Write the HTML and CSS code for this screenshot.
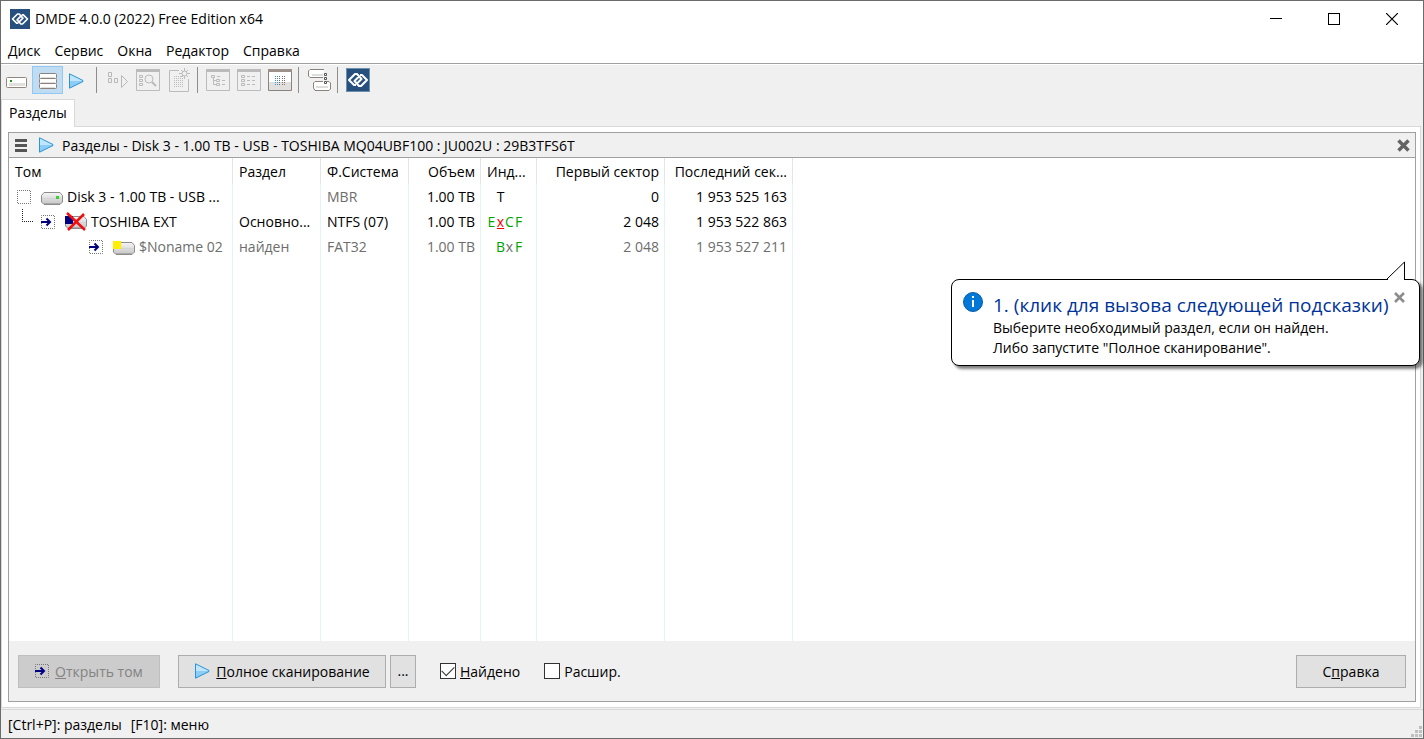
FILE: index.html
```html
<!DOCTYPE html>
<html lang="ru">

<head>
    <meta charset="UTF-8">
    <meta name="viewport" content="width=device-width, initial-scale=1.0">
    <title>DMDE 4.0.0 (2022) Free Edition x64</title>
    <link rel="stylesheet" href="styles.css">
</head>

<body>
    <!-- shared icons -->
    <svg class="defs" width="0" height="0">
        <defs>
            <linearGradient id="blue" x1="0" y1="0" x2="0" y2="1">
                <stop offset="0.5" stop-color="#bfe6fc" />
                <stop offset="0.5" stop-color="#8ccdf8" />
            </linearGradient>
            <linearGradient id="metal" x1="0" y1="0" x2="0" y2="1">
                <stop offset="0" stop-color="#f6f6f6" />
                <stop offset="1" stop-color="#c4c4c4" />
            </linearGradient>
            <symbol id="logo" viewBox="0 0 24 24">
                <rect width="24" height="24" fill="#28507e" />
                <path d="M11 15.5L15.5 11L11 6H9L3 12L8 17H10M13 8.5L8.5 13L13 18H15L21 12L16 7H14" fill="none" stroke="#fff" stroke-width="2" stroke-linejoin="round" />
            </symbol>
            <symbol id="play" viewBox="0 0 16 16">
                <path d="M1.5 0.8V15.2L15 8.5V7.5Z" fill="url(#blue)" stroke="#2a93d0" />
            </symbol>
            <symbol id="arrow" viewBox="0 0 14 14">
                <rect x="0.5" y="0.5" width="13" height="13" fill="none" stroke="#777" stroke-dasharray="1 1" stroke-dashoffset="0.5" />
                <path d="M0 7H9M5.5 3.5L9 7L5.5 10.5" fill="none" stroke="#000080" stroke-width="2" />
            </symbol>
            <symbol id="drive" viewBox="0 0 22 13">
                <path d="M3 0.5H19L21.5 3.5V10L19 12.5H3L0.5 10V3.5Z" fill="url(#metal)" stroke="#8c8c8c" />
                <path d="M1 6.5H21" stroke="#d4d4d4" />
                <path d="M3 11.5H19" stroke="#aaa" />
            </symbol>
        </defs>
    </svg>

    <div class="window">
        <header class="titlebar">
            <svg class="app-icon" width="20" height="20"><use href="#logo" /></svg>
            <h1>DMDE 4.0.0 (2022) Free Edition x64</h1>
            <div class="controls">
                <button aria-label="Свернуть"><svg width="12" height="12"><path d="M0 5.5H12" stroke="#000" /></svg></button>
                <button aria-label="Развернуть"><svg width="12" height="12"><rect x="0.5" y="0.5" width="11" height="11" fill="none" stroke="#000" /></svg></button>
                <button aria-label="Закрыть"><svg width="12" height="12"><path d="M0 0L12 12M12 0L0 12" stroke="#000" stroke-width="1.2" /></svg></button>
            </div>
        </header>

        <nav class="menu">
            <button>Диск</button>
            <button>Сервис</button>
            <button>Окна</button>
            <button>Редактор</button>
            <button>Справка</button>
        </nav>

        <div class="toolbar">
            <button aria-label="Выбрать устройство">
                <svg viewBox="0 0 25 24">
                    <rect x="2.5" y="9.5" width="20" height="10" rx="1" fill="#fff" stroke="#92867f" />
                    <rect x="5" y="15" width="16" height="3" fill="#e2dfdf" />
                    <rect x="6" y="12" width="2" height="2" fill="#129a12" />
                </svg>
            </button>
            <button class="active" aria-label="Разделы">
                <svg viewBox="0 0 25 24">
                    <g fill="#fff" stroke="#8c817b">
                        <rect x="4.5" y="5.5" width="17" height="5" rx="1" />
                        <rect x="4.5" y="10.5" width="17" height="5" rx="1" />
                        <rect x="4.5" y="15.5" width="17" height="5" rx="1" />
                    </g>
                    <path d="M6 9.5H20M6 14.5H20M6 19.5H20" stroke="#ddd" />
                </svg>
            </button>
            <button aria-label="Полное сканирование">
                <svg viewBox="0 0 25 24"><use href="#play" x="2" y="5" width="16" height="16" /></svg>
            </button>
            <span class="sep"></span>
            <button disabled aria-label="Продолжить">
                <svg viewBox="0 0 25 24" fill="none" stroke="#b8b8b8">
                    <path d="M3.5 4.5H6.5V8.5H3.5ZM3.5 10.5H6.5V14.5H3.5ZM9.5 10.5H12.5V14.5H9.5ZM16.5 7.5V19.5L22.5 13.5Z" />
                </svg>
            </button>
            <button disabled aria-label="Поиск">
                <svg viewBox="0 0 25 24" fill="none" stroke="#bbb">
                    <path d="M0.5 1.5H23.5V22.5H0.5Z" />
                    <path d="M0 2.5H24" stroke-width="3" />
                    <path d="M3.5 7.5H6.5V9.5H3.5ZM3.5 11.5H6.5V13.5H3.5ZM3.5 15.5H6.5V17.5H3.5Z" />
                    <circle cx="13" cy="11" r="4" />
                    <path d="M16 14L20 18" stroke-width="2" />
                </svg>
            </button>
            <button disabled aria-label="Новый">
                <svg viewBox="0 0 25 24" fill="none" stroke="#bbb">
                    <path d="M12 2.5H2.5V23.5H21.5V11" />
                    <path d="M7 8.5H16M7 10.5H16M7 12.5H16M7 14.5H16M7 16.5H16M7 18.5H16" stroke-dasharray="1 1" />
                    <circle cx="17.5" cy="5.5" r="2.5" />
                    <path d="M17.5 0V3M17.5 8V11M12 5.5H15M20 5.5H23M14 2L16 4M19 7L21 9M21 2L19 4M16 7L14 9" />
                </svg>
            </button>
            <span class="sep"></span>
            <button disabled aria-label="Дерево">
                <svg viewBox="0 0 25 24" fill="none" stroke="#bbb">
                    <path d="M0.5 1.5H23.5V22.5H0.5Z" />
                    <path d="M0 2.5H24" stroke-width="3" />
                    <path d="M5.5 7.5H8.5V9.5H5.5ZM10.5 11.5H13.5V13.5H10.5ZM10.5 15.5H13.5V17.5H10.5ZM7.5 9.5V16.5H10M7.5 12.5H10M11 8.5H14M16 12.5H19M16 16.5H19" />
                </svg>
            </button>
            <button disabled aria-label="Список">
                <svg viewBox="0 0 25 24" fill="none" stroke="#bbb">
                    <path d="M0.5 1.5H23.5V22.5H0.5Z" />
                    <path d="M0 2.5H24" stroke-width="3" />
                    <path d="M4.5 7.5H7.5V9.5H4.5ZM4.5 11.5H7.5V13.5H4.5ZM4.5 15.5H7.5V17.5H4.5ZM10 8.5H13M15 8.5H18M10 12.5H13M15 12.5H18M10 16.5H13M15 16.5H18" />
                </svg>
            </button>
            <button aria-label="Редактор">
                <svg viewBox="0 0 25 24" fill="none">
                    <path d="M0.5 1.5H23.5V22.5H0.5Z" fill="#fff" stroke="#8d817b" />
                    <path d="M1 14H23V22H1Z" fill="#e2dfdf" />
                    <path d="M0 2.5H24" stroke="#9d918b" stroke-width="3" />
                    <path d="M7.5 8V17M9.5 8V17" stroke="#339acb" stroke-dasharray="1 1" />
                    <path d="M11.5 8V17M14.5 8V17M16.5 8V17" stroke="#77706c" stroke-dasharray="1 1" />
                </svg>
            </button>
            <span class="sep"></span>
            <button aria-label="Окна">
                <svg viewBox="0 0 25 24" stroke="#8d817b" fill="#fff">
                    <path d="M17 1.5H3L1.5 3V8L3 9.5H16" />
                    <path d="M5 7H16" stroke="#ddd" stroke-width="2" />
                    <path d="M16 13.5H8L6.5 15V20L8 22.5H22L23.5 21V15L22 13.5H20" />
                    <path d="M9 19H21" stroke="#ddd" stroke-width="2" />
                    <path d="M17.5 5.5H19.5V7.5H17.5ZM17.5 9.5H19.5V11.5H17.5ZM17.5 13.5H19.5V15.5H17.5Z" stroke="#555" />
                </svg>
            </button>
            <span class="sep"></span>
            <button aria-label="DMDE">
                <svg viewBox="0 0 25 24">
                    <use href="#logo" width="24" height="24" />
                    <rect x="0.5" y="0.5" width="23" height="23" fill="none" stroke="#6d8fae" />
                </svg>
            </button>
        </div>

        <div class="tabs">
            <button class="tab">Разделы</button>
        </div>

        <main class="page">
            <section class="panel">
                <div class="panel-head">
                    <button aria-label="Меню"><svg width="12" height="13"><path d="M0 1.5H12M0 6.5H12M0 11.5H12" stroke="#555" stroke-width="3" /></svg></button>
                    <svg class="head-play" width="16" height="16"><use href="#play" /></svg>
                    <h2>Разделы - Disk 3 - 1.00 TB - USB - TOSHIBA MQ04UBF100 : JU002U : 29B3TFS6T</h2>
                    <button aria-label="Закрыть панель"><svg width="13" height="13"><path d="M1.5 1.5L11.5 11.5M11.5 1.5L1.5 11.5" stroke="#636363" stroke-width="3.5" /></svg></button>
                </div>

                <div class="list">
                    <table>
                        <colgroup>
                            <col class="c-volume">
                            <col class="c-part">
                            <col class="c-part">
                            <col class="c-size">
                            <col class="c-ind">
                            <col class="c-sector">
                            <col class="c-sector">
                        </colgroup>
                        <thead>
                            <tr>
                                <th>Том</th>
                                <th>Раздел</th>
                                <th>Ф.Система</th>
                                <th class="num">Объем</th>
                                <th>Инд...</th>
                                <th class="num">Первый сектор</th>
                                <th class="num">Последний сек...</th>
                            </tr>
                        </thead>
                        <tbody>
                            <tr>
                                <td>
                                    <div class="node">
                                        <svg width="14" height="14"><rect x="0.5" y="0.5" width="13" height="13" fill="none" stroke="#777" stroke-dasharray="1 1" stroke-dashoffset="0.5" /></svg>
                                        <svg class="disk" width="22" height="16"><use href="#drive" y="3" width="22" height="13" /><rect x="15" y="7" width="3" height="3" fill="#34d334" /></svg>
                                        <span>Disk 3 - 1.00 TB - USB ...</span>
                                    </div>
                                </td>
                                <td></td>
                                <td class="muted">MBR</td>
                                <td class="num">1.00 TB</td>
                                <td><div class="flags"><i></i><i>T</i></div></td>
                                <td class="num">0</td>
                                <td class="num">1 953 525 163</td>
                            </tr>
                            <tr>
                                <td>
                                    <div class="node">
                                        <svg class="branch" width="14" height="25"><path d="M4.5 0V13M4 12.5H16" fill="none" stroke="#222" stroke-dasharray="1 1" /></svg>
                                        <svg width="14" height="14"><use href="#arrow" /></svg>
                                        <svg class="vol" width="22" height="20"><use href="#drive" y="4" width="22" height="13" /><rect y="4" width="8" height="8" fill="#000080" /><path d="M2 1L20 18M19 2L3 18" stroke="#f00f0f" stroke-width="2.5" /></svg>
                                        <span>TOSHIBA EXT</span>
                                    </div>
                                </td>
                                <td>Основно...</td>
                                <td>NTFS (07)</td>
                                <td class="num">1.00 TB</td>
                                <td><div class="flags ok"><i>E</i><i class="bad">x</i><i>C</i><i>F</i></div></td>
                                <td class="num">2 048</td>
                                <td class="num">1 953 522 863</td>
                            </tr>
                            <tr class="muted">
                                <td>
                                    <div class="node deep">
                                        <svg width="14" height="14"><use href="#arrow" /></svg>
                                        <svg class="vol" width="22" height="16"><use href="#drive" y="3" width="22" height="13" /><rect y="2" width="8" height="8" fill="#ffee00" /></svg>
                                        <span>$Noname 02</span>
                                    </div>
                                </td>
                                <td>найден</td>
                                <td>FAT32</td>
                                <td class="num">1.00 TB</td>
                                <td><div class="flags ok"><i></i><i>B</i><i class="muted">x</i><i>F</i></div></td>
                                <td class="num">2 048</td>
                                <td class="num">1 953 527 211</td>
                            </tr>
                            <tr class="rest">
                                <td></td><td></td><td></td><td></td><td></td><td></td><td></td>
                            </tr>
                        </tbody>
                    </table>
                </div>

                <div class="actions">
                    <button class="btn open" disabled><svg width="14" height="14"><use href="#arrow" /></svg><span><u>О</u>ткрыть том</span></button>
                    <button class="btn scan"><svg width="16" height="16"><use href="#play" /></svg><span><u>П</u>олное сканирование</span></button>
                    <button class="btn more">...</button>
                    <label for="found"><input type="checkbox" id="found" checked><span><u>Н</u>айдено</span></label>
                    <label for="ext"><input type="checkbox" id="ext"><span>Расшир.</span></label>
                    <button class="btn help"><span>С<u>п</u>равка</span></button>
                </div>
            </section>
        </main>

        <footer class="status">
            <span>[Ctrl+P]: разделы</span>
            <span>[F10]: меню</span>
            <svg class="grip" width="12" height="12" fill="#bfbfbf"><path d="M8 0h3v3h-3zM4 4h3v3h-3zM8 4h3v3h-3zM0 8h3v3h-3zM4 8h3v3h-3zM8 8h3v3h-3z" /></svg>
        </footer>

        <div class="hint" role="status">
            <svg class="tail" width="20" height="19"><path d="M0 18L17.5 1V18" fill="#fff" stroke="#000" /><path d="M1 18.5H17" stroke="#fff" /></svg>
            <svg class="info" width="20" height="20"><circle cx="10" cy="10" r="9.5" fill="#0078d7" stroke="#0a5ca8" /><path d="M10 4V6M10 8V15" stroke="#fff" stroke-width="2" /></svg>
            <div>
                <h3>1. (клик для вызова следующей подсказки)</h3>
                <p>Выберите необходимый раздел, если он найден.</p>
                <p>Либо запустите "Полное сканирование".</p>
            </div>
            <button aria-label="Закрыть подсказку"><svg width="11" height="11"><path d="M1 1L10 10M10 1L1 10" stroke="#8c8c8c" stroke-width="2.5" /></svg></button>
        </div>
    </div>
</body>

</html>
```
FILE: styles.css
```css
* {
    box-sizing: border-box;
}

body {
    margin: 0;
    font-family: "Open Sans", "Noto Sans", sans-serif;
    font-size: 14px;
    line-height: 20px;
    color: #000;
}

h1,
h2,
h3,
p {
    margin: 0;
    font-size: 14px;
    font-weight: normal;
}

button {
    margin: 0;
    padding: 0;
    border: none;
    background: none;
    font: inherit;
    color: inherit;
}

svg {
    display: block;
    flex: none;
}

.defs {
    position: absolute;
}

.window {
    position: relative;
    display: flex;
    flex-direction: column;
    height: 100vh;
    border: 1px solid #6b6b6b;
    background: #f0f0f0;
}

/* title and menu */
.titlebar {
    display: flex;
    align-items: center;
    height: 37px;
    padding: 0 2px 2px 9px;
    background: #fff;
}

.titlebar h1 {
    flex: 1;
    padding-left: 5px;
}

.controls {
    display: flex;
}

.controls button {
    display: flex;
    justify-content: center;
    width: 58px;
}

.menu {
    display: flex;
    gap: 14px;
    height: 25px;
    padding: 3px 7px;
    background: #fff;
}

/* toolbar */
.toolbar {
    display: flex;
    height: 36px;
    padding: 2px 0 5px;
    border-top: 1px solid #a0a0a0;
    box-shadow: inset 0 1px #fff;
}

.toolbar button {
    width: 31px;
    height: 28px;
    padding-left: 3px;
}

.toolbar button svg {
    width: 25px;
    height: 24px;
}

.toolbar .active {
    background: #c0dcf3;
    outline: 1px solid #90c8f6;
    outline-offset: -1px;
}

.toolbar .sep {
    width: 6px;
    margin: 1px 0 1px 2px;
    border-left: 1px solid #8d8d8d;
}

.tabs {
    display: flex;
    height: 27px;
}

.tab {
    z-index: 1;
    height: 28px;
    padding: 0 7px 2px;
    background: #fff;
    border: 1px solid #d9d9d9;
    border-bottom: none;
}

/* partitions page */
.page {
    flex: 1;
    display: flex;
    min-height: 0;
    margin-right: 2px;
    padding: 5px 4px 5px 6px;
    background: #fff;
    border: 1px solid #d9d9d9;
}

.panel {
    flex: 1;
    display: flex;
    flex-direction: column;
    border: 1px solid #a0a0a0;
}

.panel-head {
    display: flex;
    align-items: center;
    height: 25px;
    padding: 0 5px 0 6px;
    background: #f0f0f0;
    border-bottom: 1px solid #a0a0a0;
}

.panel-head h2 {
    flex: 1;
    padding: 2px 0 0 8px;
}

.head-play {
    margin-left: 11px;
}

.list {
    flex: 1;
    min-height: 0;
    background: #fff;
}

table {
    width: 784px;
    height: 100%;
    table-layout: fixed;
    border-collapse: separate;
    border-spacing: 0;
}

.c-volume {
    width: 224px;
}

.c-part {
    width: 88px;
}

.c-size {
    width: 72px;
}

.c-ind {
    width: 56px;
}

.c-sector {
    width: 128px;
}

tr {
    height: 25px;
}

tr.rest {
    height: auto;
}

th,
td {
    padding: 0 5px 0 6px;
    border-right: 1px solid #e5f1fb;
    font-weight: normal;
    text-align: left;
    white-space: nowrap;
    overflow: hidden;
}

th {
    height: 26px;
    padding-top: 2px;
    border-right-color: #e5e5e5;
}

.num {
    text-align: right;
    padding-left: 0;
}

.muted {
    color: #6d6d6d;
}

.node {
    display: flex;
    align-items: center;
    height: 25px;
    padding-left: 2px;
}

.deep {
    padding-left: 74px;
}

.node span {
    padding-left: 4px;
}

.branch {
    margin-left: 1px;
    margin-right: 9px;
    overflow: visible;
}

.disk,
.vol {
    margin-left: 10px;
}

.flags {
    display: flex;
}

.flags i {
    width: 9px;
    font-style: normal;
    text-align: center;
}

.ok {
    color: #00a400;
}

.ok .muted {
    color: #6d6d6d;
}

.bad {
    color: #f00000;
    text-decoration: underline;
}

/* buttons under the list */
.actions {
    display: flex;
    align-items: center;
    height: 60px;
    padding: 0 9px;
    background: #f0f0f0;
}

.btn {
    display: flex;
    align-items: center;
    justify-content: center;
    height: 33px;
    padding: 0 12px;
    background: #e1e1e1;
    border: 1px solid #adadad;
}

.btn svg {
    margin-right: 6px;
}

.btn:disabled {
    background: #ccc;
    border-color: #bfbfbf;
    color: #838383;
}

.btn span,
.actions label span {
    padding-top: 1px;
}

.open {
    min-width: 142px;
}

.scan {
    min-width: 208px;
    margin-left: 18px;
}

.more {
    width: 26px;
    margin-left: 4px;
    padding: 0;
}

.help {
    width: 110px;
    margin-left: auto;
}

.actions label {
    display: flex;
    align-items: center;
    margin-left: 24px;
}

.actions input {
    appearance: none;
    width: 16px;
    height: 16px;
    margin: 0 4px 0 0;
    background: #fff;
    border: 1px solid #333;
}

.actions input:checked::before {
    content: "";
    display: block;
    width: 11px;
    height: 6px;
    margin: 2px 0 0 1px;
    border-left: 1px solid #333;
    border-bottom: 1px solid #333;
    transform: rotate(-45deg);
}

.status {
    display: flex;
    align-items: center;
    gap: 9px;
    height: 29px;
    margin-top: 1px;
    padding: 1px 0 0 7px;
    border-top: 1px solid #d9d9d9;
}

.grip {
    margin-left: auto;
    align-self: flex-end;
}

/* balloon over the window */
.hint {
    position: absolute;
    top: 278px;
    right: 3px;
    display: flex;
    align-items: flex-start;
    width: 469px;
    height: 87px;
    padding: 12px 14px 0 11px;
    background: #fff;
    border: 1px solid #000;
    border-radius: 8px;
    box-shadow: 3px 3px 3px rgba(0, 0, 0, 0.5);
}

.hint > div {
    flex: 1;
    padding-left: 10px;
    white-space: nowrap;
}

.hint h3 {
    font-size: 19px;
    line-height: 26px;
    color: #003399;
}

.tail {
    position: absolute;
    top: -19px;
    right: 12px;
}
```
